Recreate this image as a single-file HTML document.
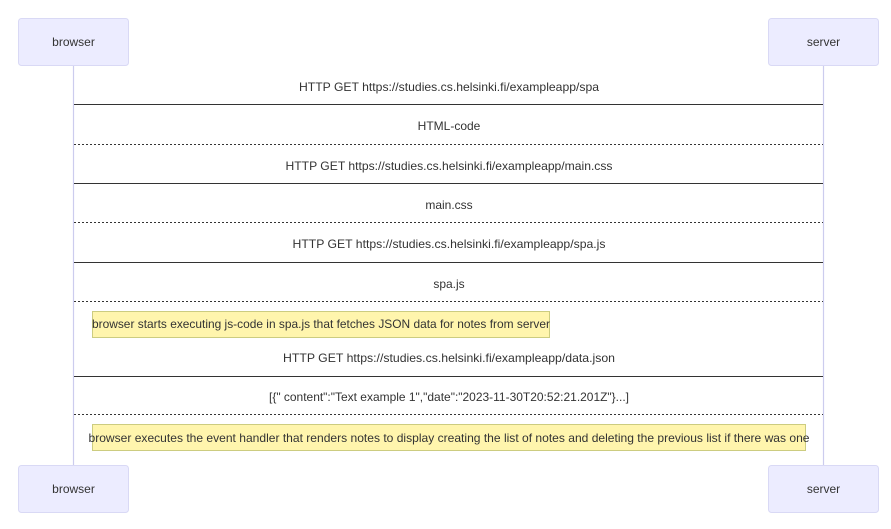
<!DOCTYPE html>
<html><head><style>body{margin:0;background:#fff}svg{display:block}text{font-family:"Liberation Sans",sans-serif;font-size:12px;fill:#333}</style></head>
<body>
<svg width="891" height="529" viewBox="0 0 891 529" xmlns="http://www.w3.org/2000/svg">
<line x1="73.5" y1="65" x2="73.5" y2="465" stroke="#ccccee" stroke-width="1.2"/>
<line x1="823.5" y1="65" x2="823.5" y2="465" stroke="#ccccee" stroke-width="1.2"/>
<g fill="#ececff" stroke="#d9d9f5">
<rect x="18.5" y="18.5" width="110" height="47" rx="3"/>
<rect x="768.5" y="18.5" width="110" height="47" rx="3"/>
<rect x="18.5" y="465.5" width="110" height="47" rx="3"/>
<rect x="768.5" y="465.5" width="110" height="47" rx="3"/>
</g>
<g text-anchor="middle" style="font-size:11.5px">
<text x="73.5" y="46">browser</text>
<text x="823.5" y="46">server</text>
<text x="73.5" y="493">browser</text>
<text x="823.5" y="493">server</text>
</g>
<g stroke="#333" stroke-width="1">
<line x1="74" y1="104.5" x2="823" y2="104.5"/>
<line x1="74" y1="144.5" x2="823" y2="144.5" stroke-dasharray="2,2"/>
<line x1="74" y1="183.5" x2="823" y2="183.5"/>
<line x1="74" y1="222.5" x2="823" y2="222.5" stroke-dasharray="2,2"/>
<line x1="74" y1="262.5" x2="823" y2="262.5"/>
<line x1="74" y1="301.5" x2="823" y2="301.5" stroke-dasharray="2,2"/>
<line x1="74" y1="376.5" x2="823" y2="376.5"/>
<line x1="74" y1="414.5" x2="823" y2="414.5" stroke-dasharray="2,2"/>
</g>
<g fill="#fff5ad" stroke="#cccc80">
<rect x="92.5" y="311.5" width="457" height="26"/>
<rect x="92.5" y="424.5" width="713" height="26"/>
</g>
<g text-anchor="middle">
<text x="449" y="91" textLength="300" lengthAdjust="spacingAndGlyphs">HTTP GET https://studies.cs.helsinki.fi/exampleapp/spa</text>
<text x="449" y="130">HTML-code</text>
<text x="449" y="170" textLength="327" lengthAdjust="spacingAndGlyphs">HTTP GET https://studies.cs.helsinki.fi/exampleapp/main.css</text>
<text x="449" y="209">main.css</text>
<text x="449" y="248" textLength="313" lengthAdjust="spacingAndGlyphs">HTTP GET https://studies.cs.helsinki.fi/exampleapp/spa.js</text>
<text x="449" y="288">spa.js</text>
<text x="321" y="328" textLength="458" lengthAdjust="spacingAndGlyphs">browser starts executing js-code in spa.js that fetches JSON data for notes from server</text>
<text x="449" y="362" textLength="332" lengthAdjust="spacingAndGlyphs">HTTP GET https://studies.cs.helsinki.fi/exampleapp/data.json</text>
<text x="449" y="401" textLength="360" lengthAdjust="spacingAndGlyphs">[{" content":"Text example 1","date":"2023-11-30T20:52:21.201Z"}...]</text>
<text x="449" y="442" textLength="721" lengthAdjust="spacingAndGlyphs">browser executes the event handler that renders notes to display creating the list of notes and deleting the previous list if there was one</text>
</g>
</svg>
</body></html>
